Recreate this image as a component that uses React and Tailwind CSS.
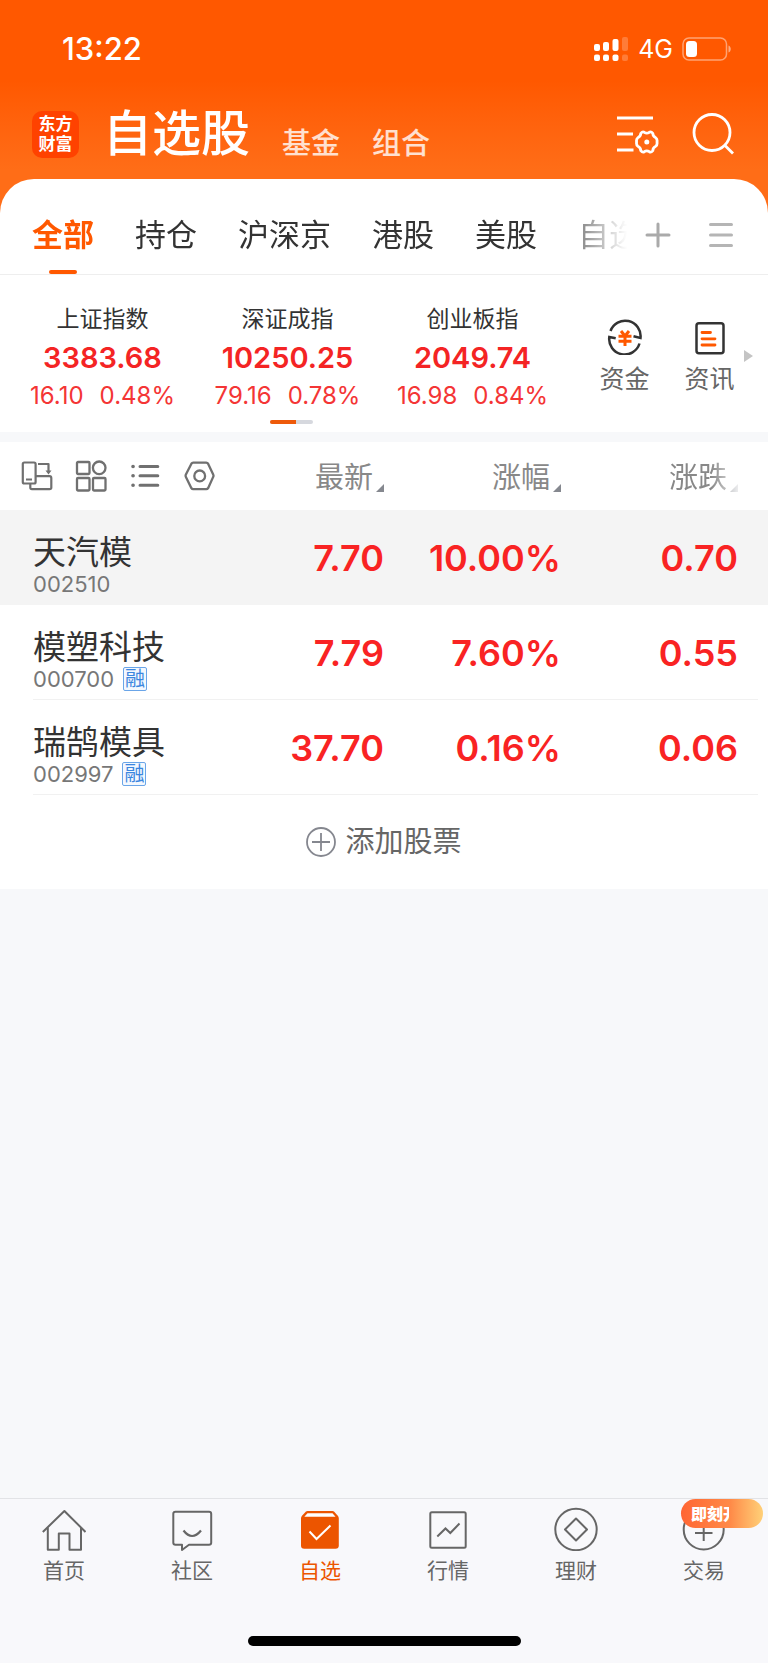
import { useState } from 'react'

const MARKET_TABS = ['全部', '持仓', '沪深京', '港股', '美股', '自选']

const INDICES = [
  { name: '上证指数', value: '3383.68', change: '16.10', percent: '0.48%' },
  { name: '深证成指', value: '10250.25', change: '79.16', percent: '0.78%' },
  { name: '创业板指', value: '2049.74', change: '16.98', percent: '0.84%' },
]

const STOCKS = [
  { name: '天汽模', code: '002510', price: '7.70', percent: '10.00%', change: '0.70', pinned: true },
  { name: '模塑科技', code: '000700', margin: true, price: '7.79', percent: '7.60%', change: '0.55' },
  { name: '瑞鹄模具', code: '002997', margin: true, price: '37.70', percent: '0.16%', change: '0.06' },
]

const NAV_ITEMS = [
  { id: 'home', label: '首页', Icon: HomeIcon },
  { id: 'community', label: '社区', Icon: CommunityIcon },
  { id: 'watchlist', label: '自选', Icon: WatchlistIcon },
  { id: 'market', label: '行情', Icon: MarketIcon },
  { id: 'wealth', label: '理财', Icon: WealthIcon },
  { id: 'trade', label: '交易', Icon: TradeIcon, badge: '即刻开' },
]

export default function App() {
  const [tab, setTab] = useState('全部')
  const [page, setPage] = useState('watchlist')

  return (
    <div className="flex min-h-dvh flex-col bg-[#f7f8fa] font-['Inter','Noto_Sans_CJK_SC',sans-serif] text-[#333]">
      <Header />
      <main className="bg-[#ff6d17]">
        <div className="rounded-t-[34px] bg-white">
          <MarketTabs active={tab} onChange={setTab} />
          <IndexStrip />
        </div>
        <div className="h-[10px] bg-[#f7f8fa]" />
        <div className="bg-white">
          <StockTable />
          <button
            type="button"
            className="flex h-[94px] w-full items-center justify-center gap-[9px] text-[29px] leading-8 text-[#666]"
          >
            <PlusCircleIcon />
            添加股票
          </button>
        </div>
      </main>
      <BottomNav active={page} onChange={setPage} />
    </div>
  )
}

function Header() {
  return (
    <header className="bg-linear-to-b from-[#ff5800] from-45% to-[#ff6d17] to-95% pb-[9px] text-white">
      <div className="flex h-[98px] items-center justify-between pr-[36px] pl-[62px]">
        <span className="text-[31px] leading-8 font-medium">13:22</span>
        <div className="flex items-center gap-[9px]">
          <SignalIcon />
          <span className="text-[25px] leading-8">4G</span>
          <BatteryIcon />
        </div>
      </div>
      <div className="flex h-[72px] items-center pr-[32px] pl-[32px]">
        <div className="flex size-[47px] flex-col items-center justify-center rounded-[10px] bg-[#ff4200] text-[17px] leading-5 font-bold">
          <span>东方</span>
          <span>财富</span>
        </div>
        <nav className="ml-6 flex items-end gap-[32px]" aria-label="分类">
          <a href="#stocks" className="text-[49px] leading-[72px] font-medium">
            自选股
          </a>
          <a href="#funds" className="pb-[6px] text-[29px] leading-10 font-medium text-white/80">
            基金
          </a>
          <a href="#portfolio" className="pb-[6px] text-[29px] leading-10 font-medium text-white/80">
            组合
          </a>
        </nav>
        <div className="ml-auto flex items-center gap-[32px]">
          <button type="button" aria-label="设置">
            <ListSettingsIcon />
          </button>
          <button type="button" aria-label="搜索">
            <SearchIcon />
          </button>
        </div>
      </div>
    </header>
  )
}

function MarketTabs({ active, onChange }) {
  return (
    <div className="flex h-[96px] items-center border-b border-[#eee] pr-[34px] pl-[32px]">
      <div className="flex h-full min-w-0 flex-1 gap-[41px] overflow-hidden [mask-image:linear-gradient(to_right,black_calc(100%-80px),transparent)]">
        {MARKET_TABS.map((name) => (
          <button
            key={name}
            type="button"
            onClick={() => onChange(name)}
            className={`relative h-full shrink-0 pt-[20px] pb-[4px] text-[31px] leading-8 ${
              active === name ? 'font-bold text-[#ff5800]' : 'text-[#333]'
            }`}
          >
            {name}
            {active === name ? (
              <span className="absolute bottom-0 left-1/2 h-1 w-7 -translate-x-1/2 rounded-full bg-[#ff5800]" />
            ) : null}
          </button>
        ))}
      </div>
      <div className="ml-[18px] flex items-center gap-[37px] pt-[16px]">
        <button type="button" aria-label="添加分组">
          <svg className="size-[26px]" viewBox="0 0 26 26" fill="none" stroke="#aaa" strokeWidth="3" strokeLinecap="round">
            <path d="M2 13H24M13 2V24" />
          </svg>
        </button>
        <button type="button" aria-label="分组管理">
          <svg className="size-[26px]" viewBox="0 0 26 26" fill="none" stroke="#b5b5b5" strokeWidth="3" strokeLinecap="round">
            <path d="M2.500 2.500H23.500M2.500 13H23.500M2.500 23.500H23.500" />
          </svg>
        </button>
      </div>
    </div>
  )
}

function IndexStrip() {
  return (
    <section className="relative flex h-[157px] pt-[28px] pr-4 pl-[10px]" aria-label="指数">
      <div className="mr-[17px] flex flex-1 flex-col">
        <div className="grid grid-cols-3">
          {INDICES.map((item) => (
            <div key={item.name} className="flex flex-col items-center">
              <span className="text-[23px] leading-8">{item.name}</span>
              <span className="mt-[3px] text-[29px] leading-10 font-semibold text-[#f42424]">{item.value}</span>
              <span className="mt-[2px] flex gap-4 text-[24px] leading-8 text-[#f43535]">
                <span>{item.change}</span>
                <span>{item.percent}</span>
              </span>
            </div>
          ))}
        </div>
        <div className="mt-2 flex justify-center pl-2">
          <div className="flex h-1 w-[43px] overflow-hidden rounded-full bg-[#d6d8de]">
            <span className="w-[26px] bg-[#ee5a0a]" />
          </div>
        </div>
      </div>
      <a href="#capital" className="flex w-[85px] flex-col items-center pt-[16px] text-[25px] leading-8 text-[#666]">
        <CapitalIcon />
        <span className="mt-2">资金</span>
      </a>
      <a href="#news" className="flex w-[85px] flex-col items-center pt-[16px] text-[25px] leading-8 text-[#666]">
        <NewsIcon />
        <span className="mt-2">资讯</span>
      </a>
      <svg className="absolute top-[75px] right-[15px] h-3 w-[9px]" viewBox="0 0 9 12" fill="#c4c4c4">
        <path d="M0 0L9 6L0 12Z" />
      </svg>
    </section>
  )
}

function StockTable() {
  return (
    <table className="w-full table-fixed border-collapse">
      <colgroup>
        <col />
        <col className="w-[177px]" />
        <col className="w-[177px]" />
        <col className="w-[207px]" />
      </colgroup>
      <thead>
        <tr className="h-[68px]">
          <th className="p-0 pl-[21px]">
            <div className="flex gap-[22px] text-[#707070]">
              <button type="button" aria-label="横屏">
                <RotateIcon />
              </button>
              <button type="button" aria-label="宫格">
                <GridIcon />
              </button>
              <button type="button" aria-label="列表">
                <ListIcon />
              </button>
              <button type="button" aria-label="列设置">
                <HexIcon />
              </button>
            </div>
          </th>
          <SortHeader label="最新" />
          <SortHeader label="涨幅" />
          <SortHeader
            label="涨跌"
            className="pr-[30px] [mask-image:linear-gradient(to_right,black_150px,transparent_182px)]"
          />
        </tr>
      </thead>
      <tbody>
        {STOCKS.map((stock) => (
          <StockRow key={stock.code} stock={stock} />
        ))}
      </tbody>
    </table>
  )
}

function SortHeader({ label, className = '' }) {
  return (
    <th className={`p-0 pt-1 font-normal ${className}`}>
      <button type="button" className="ml-auto flex items-end gap-[3px] text-[29px] leading-8 text-[#888]">
        {label}
        <svg className="mb-[2px] size-2" viewBox="0 0 8 8" fill="#85888f">
          <path d="M8 0V8H0Z" />
        </svg>
      </button>
    </th>
  )
}

function StockRow({ stock }) {
  const { name, code, margin, price, percent, change, pinned } = stock
  return (
    <tr
      className={`h-[95px] text-right text-[36px] leading-10 font-semibold text-[#f92323] ${
        pinned
          ? 'bg-[#f4f4f4]'
          : 'bg-[linear-gradient(#f1f1f1,#f1f1f1)] bg-[length:calc(100%-43px)_1px] bg-[position:33px_100%] bg-no-repeat'
      }`}
    >
      <td className="p-0 pt-4 pl-[33px] text-left font-normal">
        <div className="text-[33px] leading-9 text-[#333]">{name}</div>
        <div className="flex h-7 items-center gap-[9px] text-[22px] text-[#777]">
          {code}
          {margin ? (
            <span className="flex size-6 items-center justify-center rounded-[2px] border border-[#6aa5e8] bg-[#f3f8fe] text-[20px] leading-5 text-[#3b86df]">
              融
            </span>
          ) : null}
        </div>
      </td>
      <td className="p-0">{price}</td>
      <td className="p-0">{percent}</td>
      <td className="p-0 pr-[30px]">{change}</td>
    </tr>
  )
}

function BottomNav({ active, onChange }) {
  return (
    <footer className="mt-auto border-t border-[#e2e3e6] bg-[#f8f8fb]">
      <nav className="grid h-[137px] grid-cols-6 items-start" aria-label="主导航">
        {NAV_ITEMS.map(({ id, label, Icon, badge }) => (
          <button
            key={id}
            type="button"
            onClick={() => onChange(id)}
            className={`relative flex flex-col items-center pt-2 text-[21px] leading-6 ${
              active === id ? 'text-[#ec5500]' : 'text-[#666]'
            }`}
          >
            <Icon />
            <span className="mt-2">{label}</span>
            {badge ? (
              <span className="absolute top-0 right-[5px] flex h-[29px] w-[82px] items-center rounded-full bg-linear-to-r from-[#ff6533] via-[#ff8a48] via-60% to-[#ffd078] pl-[10px] text-[16px] font-black text-white">
                <span className="w-[38px] overflow-hidden text-left whitespace-nowrap">{badge}</span>
              </span>
            ) : null}
          </button>
        ))}
      </nav>
      <div className="flex h-[27px] justify-center">
        <div className="h-[10px] w-[273px] rounded-full bg-black" />
      </div>
    </footer>
  )
}

/* ---- icons ---- */

function SignalIcon() {
  return (
    <svg className="h-[26px] w-[36px]" viewBox="0 0 36 26" fill="#fff">
      <rect x="1" y="8" width="6" height="7" rx="2" />
      <rect x="10" y="6" width="6" height="9" rx="2" />
      <rect x="19.500" y="3" width="6" height="12" rx="2" />
      <rect x="29" y="1" width="6" height="14" rx="2" opacity=".22" />
      <rect x="1" y="18.500" width="6" height="6.500" rx="2" />
      <rect x="10" y="18.500" width="6" height="6.500" rx="2" />
      <rect x="19.500" y="18.500" width="6" height="6.500" rx="2" />
      <rect x="29" y="18.500" width="6" height="6.500" rx="2" opacity=".22" />
    </svg>
  )
}

function BatteryIcon() {
  return (
    <svg className="h-[24px] w-[50px]" viewBox="0 0 50 24" fill="none">
      <rect x="1" y="1" width="43.500" height="22" rx="6" stroke="#fff" strokeOpacity=".45" strokeWidth="1.500" />
      <rect x="4" y="4" width="11" height="16" rx="3.500" fill="#fff" />
      <path d="M46.500 8.500C49.500 9.500 49.500 14.500 46.500 15.500Z" fill="#fff" fillOpacity=".5" />
    </svg>
  )
}

function ListSettingsIcon() {
  return (
    <svg className="h-10 w-[44px]" viewBox="0 0 44 40" fill="none" stroke="#fff" strokeWidth="2.800">
      <path d="M1 4H37M1 20H17M1 36H17.500" />
      <path
        d="M24.800 19.300Q26.600 17.200 28.300 18.300Q30.800 20 33.300 18.300Q35 17.200 36.800 19.300Q36.900 22.700 39.800 23.800Q41.500 25 41 28Q41.500 31 39.800 32.200Q36.900 33.300 36.800 36.700Q35 38.800 33.300 37.700Q30.800 36 28.300 37.700Q26.600 38.800 24.800 36.700Q24.700 33.300 21.800 32.200Q20.100 31 20.600 28Q20.100 25 21.800 23.800Q24.700 22.700 24.800 19.300Z"
        strokeLinejoin="round"
      />
      <circle cx="30.800" cy="28" r="2.500" fill="#fff" stroke="none" />
    </svg>
  )
}

function SearchIcon() {
  return (
    <svg className="size-[44px]" viewBox="0 0 44 44" fill="none" stroke="#fff" strokeWidth="2.800">
      <circle cx="20" cy="20.500" r="18" />
      <path d="M32.500 33L41 41.500" />
    </svg>
  )
}

/* two open arcs, each ending in a short arrow tick */
function CapitalIcon() {
  return (
    <svg className="size-9" viewBox="0 0 36 36" fill="none" strokeWidth="2.500">
      <path d="M3.500 12A15.500 15.500 0 0 1 33.500 19L26.500 17.200" stroke="#333" />
      <path d="M32.500 24.500A15.500 15.500 0 0 1 2.300 18L8.700 19.200" stroke="#333" />
      <path d="M14 12L18 17L22 12M11.500 17.200H24.500M11.500 22.200H24.500M18 17V27" stroke="#ff5800" strokeWidth="3" />
    </svg>
  )
}

function NewsIcon() {
  return (
    <svg className="size-9" viewBox="0 0 36 36" fill="none">
      <rect x="4.500" y="4.200" width="27" height="30" rx="2.500" stroke="#333" strokeWidth="2.500" />
      <path d="M10 13.500H18.500M10 19.800H23M10 26H23" stroke="#ff5800" strokeWidth="2.800" strokeLinecap="round" />
    </svg>
  )
}

function RotateIcon() {
  return (
    <svg className="size-8" viewBox="0 0 32 32" fill="none" stroke="currentColor" strokeWidth="2.200" strokeLinejoin="round">
      <rect x="1.800" y="2.500" width="12.800" height="21" rx="1.500" />
      <path d="M5 19.500H11M17 4H27.500V12M15 16.200H28.500Q30.300 16.200 30.300 18V27.500Q30.300 29.200 28.500 29.200H11Q9.300 29.200 9.300 27.500V24" />
      <path d="M24.500 10.500H30.500L27.500 14.500Z" fill="currentColor" stroke="none" />
    </svg>
  )
}

function GridIcon() {
  return (
    <svg className="size-8" viewBox="0 0 32 32" fill="none" stroke="currentColor" strokeWidth="2.300">
      <rect x="2" y="2" width="12.500" height="12" rx="1" />
      <circle cx="24.200" cy="7.800" r="6.300" />
      <rect x="2" y="18" width="12.500" height="12.500" rx="1" />
      <rect x="18" y="18" width="12.500" height="12.500" rx="1" />
    </svg>
  )
}

function ListIcon() {
  return (
    <svg className="size-8" viewBox="0 0 32 32" fill="none" stroke="currentColor" strokeWidth="3" strokeLinecap="round">
      <path d="M11 6.500H28.800M11 15.800H28.800M11 25.300H28.800" />
      <path d="M4 6.500H4.100M4 15.800H4.100M4 25.300H4.100" strokeWidth="3.600" />
    </svg>
  )
}

function HexIcon() {
  return (
    <svg className="size-8" viewBox="0 0 32 32" fill="none" stroke="currentColor" strokeWidth="2.300" strokeLinejoin="round">
      <path d="M10.200 2.700H23.200Q24.500 2.700 25.100 3.700L30.200 14.500Q30.800 15.700 30.200 16.900L25.100 28.200Q24.500 29.200 23.200 29.200H10.200Q9 29.200 8.400 28.200L2.900 16.900Q2.300 15.700 2.900 14.500L8.400 3.700Q9 2.700 10.200 2.700Z" />
      <circle cx="16.700" cy="15.900" r="5.400" />
    </svg>
  )
}

function PlusCircleIcon() {
  return (
    <svg className="size-[30px]" viewBox="0 0 30 30" fill="none" stroke="#85878f" strokeWidth="1.800">
      <circle cx="15" cy="15" r="14" />
      <path d="M6 15H24M15 6V24" />
    </svg>
  )
}

function HomeIcon() {
  return (
    <svg className="size-11" viewBox="0 0 44 44" fill="none" stroke="currentColor" strokeWidth="2" strokeLinejoin="round">
      <path d="M.8 25L22.400 4L43.500 25" />
      <path d="M5.800 20.500V42.700H16.800V26.500H27.500V42.700H39V20.500" />
    </svg>
  )
}

function CommunityIcon() {
  return (
    <svg className="size-11" viewBox="0 0 44 44" fill="none" stroke="currentColor" strokeWidth="2" strokeLinejoin="round">
      <path d="M5.500 4.800H39Q41.200 4.800 41.200 6.800V35.800Q41.200 37.800 39 37.800H19L12 43V37.800H5.500Q3.300 37.800 3.300 35.800V6.800Q3.300 4.800 5.500 4.800Z" />
      <path d="M13.500 23.500Q22 34.500 31 23.500" strokeWidth="2.200" />
    </svg>
  )
}

function WatchlistIcon() {
  return (
    <svg className="size-11" viewBox="0 0 44 44" fill="none">
      <path d="M9.500 4H34.500Q35.500 4 36.200 4.700L40 9Q40.800 10 40.800 11.500V38.500Q40.800 41.700 37.500 41.700H6.300Q3 41.700 3 38.500V11.500Q3 10 3.800 9L7.700 4.700Q8.500 4 9.500 4Z" fill="currentColor" />
      <path d="M9.500 6.200H34.500L37.500 9.700H6.300Z" fill="#fff" />
      <path d="M11.500 24.500L18.500 32L32.500 18.500" stroke="#fff" strokeWidth="2" />
    </svg>
  )
}

function MarketIcon() {
  return (
    <svg className="size-11" viewBox="0 0 44 44" fill="none" stroke="currentColor" strokeWidth="2">
      <rect x="4.300" y="5.300" width="35.400" height="35.400" rx="1.500" />
      <path d="M11.300 29.500L19.500 21.500L24.300 26L33.500 16.500" />
    </svg>
  )
}

function WealthIcon() {
  return (
    <svg className="size-11" viewBox="0 0 44 44" fill="none" stroke="currentColor" strokeWidth="2" strokeLinejoin="round">
      <circle cx="22" cy="22.500" r="20.700" />
      <path d="M22 11.500L33 22.500L22 33.500L11 22.500Z" />
    </svg>
  )
}

function TradeIcon() {
  return (
    <svg className="size-11" viewBox="0 0 44 44" fill="none" stroke="currentColor" strokeWidth="2">
      <circle cx="21.700" cy="22.500" r="20" />
      <path d="M13 26H30.500M21.700 17V34" />
    </svg>
  )
}
